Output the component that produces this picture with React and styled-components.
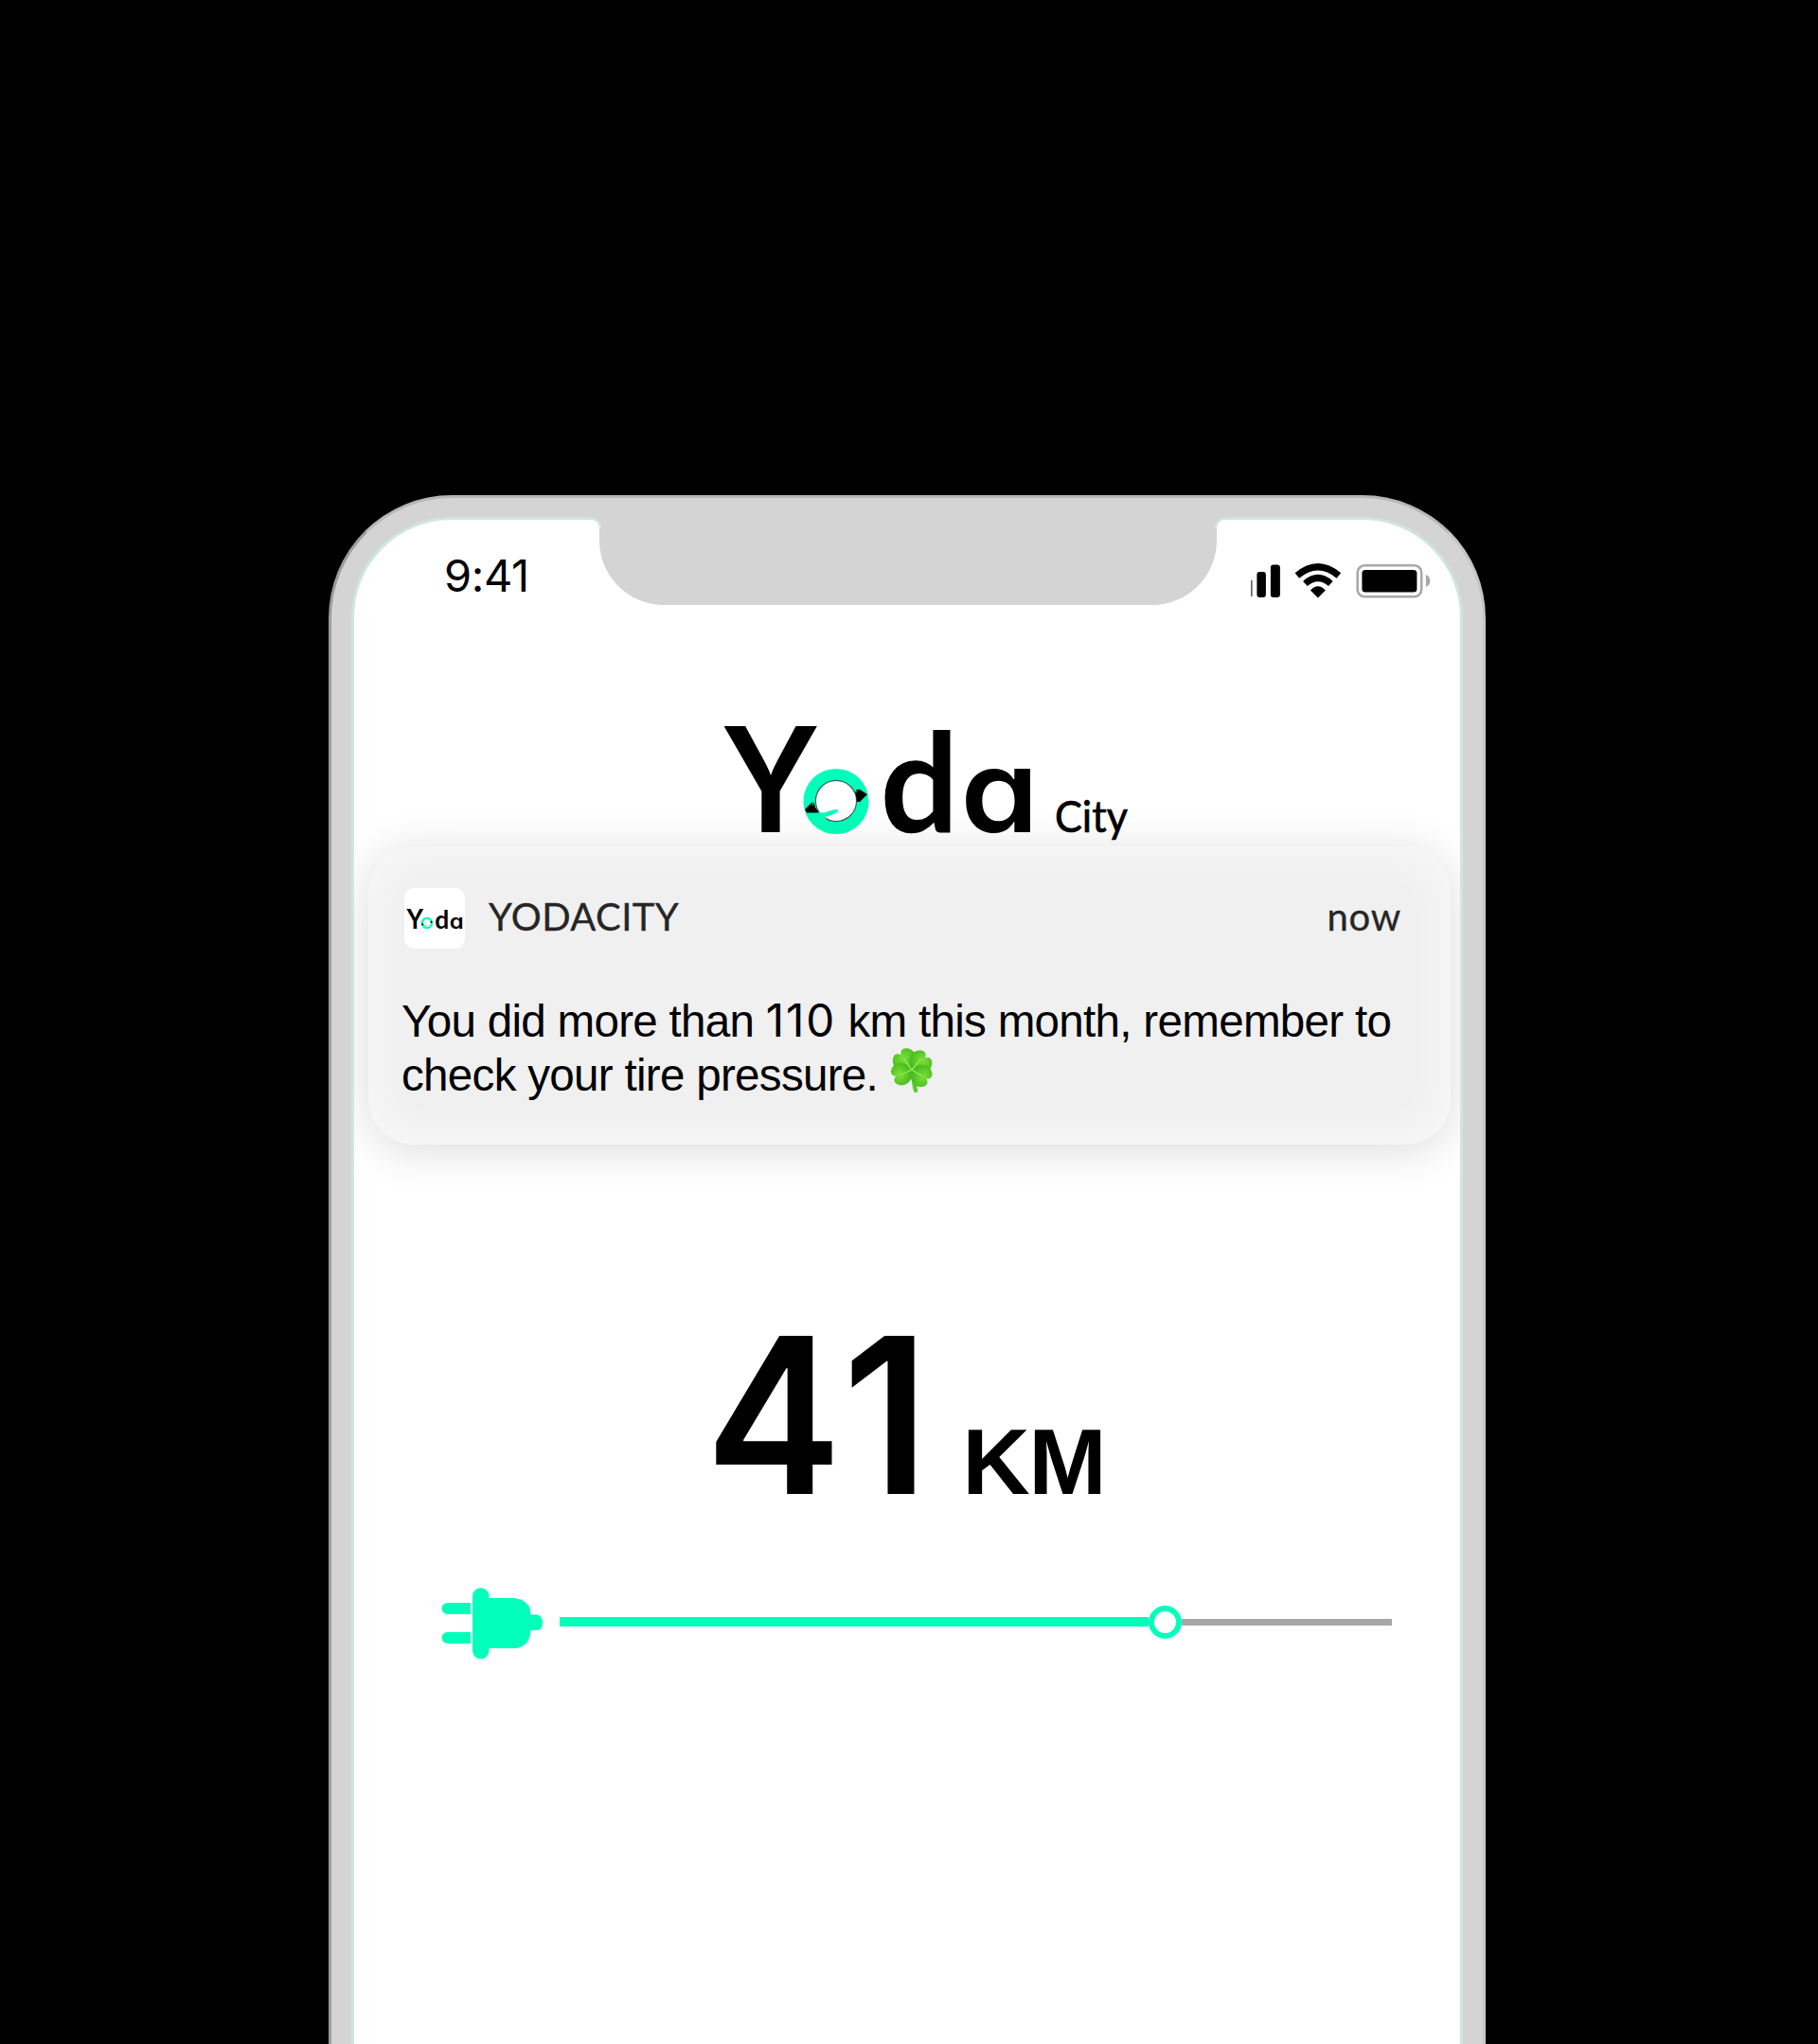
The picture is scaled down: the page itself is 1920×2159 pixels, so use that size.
import React from "react";
import styled, { createGlobalStyle } from "styled-components";

const mint = "#00ffba";
const sans = `"Liberation Sans", Arial, sans-serif`;

const GlobalStyle = createGlobalStyle`
  * { box-sizing: border-box; }
  body { margin: 0; background: #000; }
`;

const Page = styled.main`
  height: 2159px;
  padding: 523px 351px 0 347px;
  background: #000;
  overflow: hidden;
`;

const Phone = styled.div`
  position: relative;
  height: 1800px;
  padding: 20px 21px 0;
  border: 3px solid #b7b5b5;
  border-left-color: #9d9b9b;
  border-right-color: #c5c5c5;
  border-radius: 130px 130px 0 0;
  background: #d4d4d4;
`;

const Screen = styled.div`
  height: 100%;
  border: 3px solid #cfe6de;
  border-radius: 106px 106px 0 0;
  background: #fff;
  overflow: hidden;
`;

const Notch = styled.div`
  position: absolute;
  top: 18px;
  left: 283px;
  width: 652px;
  height: 95px;
  border-radius: 0 0 68px 68px;
  background: #d4d4d4;

  &::before,
  &::after {
    content: "";
    position: absolute;
    top: 2px;
    width: 12px;
    height: 12px;
  }
  &::before {
    right: calc(100% - 3px);
    background: radial-gradient(circle at 0 100%, #fff 8.5px, #cfe6de 9.5px, #cfe6de 11px, #d4d4d4 12px);
  }
  &::after {
    left: calc(100% - 3px);
    background: radial-gradient(circle at 100% 100%, #fff 8.5px, #cfe6de 9.5px, #cfe6de 11px, #d4d4d4 12px);
  }
`;

const StatusBar = styled.header`
  display: flex;
  justify-content: space-between;
  height: 100px;
  padding: 31px 30px 0 95px;
`;

const Clock = styled.time`
  font: 47px/56px Inter, ${sans};
  letter-spacing: -0.4px;
  color: #000;
`;

const StatusIcons = styled.svg`
  display: block;
  width: 192px;
  height: 40px;
  margin-top: 14px;
`;

const Brand = styled.div`
  height: 162px;
  padding: 106px 0 0 386px;
`;

const LogoSvg = styled.svg`
  display: block;
  overflow: visible;
  font-family: Inter, sans-serif;
  font-feature-settings: "cv11" 1;
`;

const Suffix = styled.text`
  font-family: Lato, sans-serif;
  font-size: 47px;
  stroke: #000;
  stroke-width: 0.7px;
`;

const StemLetter = styled.text`
  font-family: Lato, sans-serif;
  font-size: 146px;
  font-weight: 700;
`;

const Banner = styled.section`
  position: relative;
  width: 1143px;
  height: 315px;
  margin: 83px 0 0 15px;
  padding: 44px 52px 0 38px;
  border-radius: 48px;
  background: #f0f0f0;
  box-shadow: 0 6px 48px rgba(0, 0, 0, 0.14), inset 0 0 50px rgba(255, 255, 255, 0.75);
`;

const BannerHead = styled.div`
  display: flex;
  height: 64px;
  color: #262626;
  font: 40px/60px Lato, sans-serif;
`;

const AppIcon = styled.div`
  width: 64px;
  height: 64px;
  padding: 20px 2px 0;
  border-radius: 11px;
  background: #fff;
`;

const AppName = styled.span`
  margin-left: 25px;
  letter-spacing: 0.4px;
  -webkit-text-stroke: 0.3px #262626;
`;

const When = styled.span`
  margin-left: auto;
  letter-spacing: 0.8px;
  -webkit-text-stroke: 0.3px #262626;
`;

const Message = styled.p`
  margin: 47px 0 0 -3px;
  font: 47.6px/57px ${sans};
  letter-spacing: -0.72px;
  color: #000;
  white-space: nowrap;
`;

const Digits = styled.span`
  font-family: Inter, sans-serif;
  letter-spacing: 1.8px;
`;

const Clover = styled.svg`
  width: 48px;
  height: 52px;
  margin: -4px 0 0 -1px;
  vertical-align: -4px;
`;

const Range = styled.div`
  display: flex;
  align-items: baseline;
  height: 280px;
  margin-top: 145px;
  padding-left: 371px;
  font-family: Inter, ${sans};
  color: #000;
`;

const Distance = styled.span`
  font-size: 230px;
  font-weight: 600;
  line-height: 280px;
  letter-spacing: 8px;
  transform: scaleX(0.94);
  transform-origin: left;
`;

const Unit = styled.span`
  margin-left: 12px;
  font: 700 99px/100px ${sans};
  letter-spacing: -1.5px;
`;

const Charge = styled.div`
  display: flex;
  align-items: center;
  height: 80px;
  margin-top: 39px;
  padding-left: 92px;
`;

const Plug = styled.svg`
  width: 108px;
  height: 76px;
  margin-top: 3px;
  flex: none;
`;

const Track = styled.div`
  display: flex;
  align-items: center;
  width: 879px;
  margin-left: 17px;
`;

const Filled = styled.i`
  width: 622px;
  height: 9.5px;
  background: ${mint};
`;

const Knob = styled.i`
  width: 35px;
  height: 35px;
  border: 6px solid ${mint};
  border-radius: 50%;
  background: #fff;
`;

const Rest = styled.i`
  flex: 1;
  height: 7px;
  background: #a7a7a7;
`;

function Logo({ width, height, box, city }) {
  return (
    <LogoSvg width={width} height={height} viewBox={box}>
      <text transform="translate(21 138.5) scale(.96 1)" fontSize="154" fontWeight="600">Y</text>
      <circle cx="143" cy="106.5" r="28" fill="none" stroke={mint} strokeWidth="13" />
      <circle cx="143" cy="106" r="21.6" fill="#fff" stroke="#3b655b" strokeWidth="1.2" />
      <path d="M110 115l8-8 .5 5 1-5 1.5 6 4 5.500-13 0z" fill="#000" />
      <path d="M176 99l-8-5-4 0 1 3-2-1 1 4 1 7 3 0z" fill="#000" />
      <path d="M124 118c9 2 12-3 20-3 4 1-3 6-13 8l3 5c-6-1-10-5-10-10z" fill={mint} />
      <StemLetter transform="translate(189.500 138.500)">d</StemLetter>
      <text transform="translate(274.500 138.500) scale(1.080 1)" fontSize="122" fontWeight="600">a</text>
      {city && (
        <Suffix x="374" y="138.5" textLength="77" lengthAdjust="spacingAndGlyphs">City</Suffix>
      )}
    </LogoSvg>
  );
}

function CloverIcon() {
  const leaf = "M0 0C-12-3-13-13-8-18-5-21-1-20 0-16 1-20 5-21 8-18 13-13 12-3 0 0z";
  return (
    <Clover viewBox="0 0 46 50">
      <defs>
        <radialGradient id="leaf" cx=".5" cy=".35" r=".65">
          <stop offset="0" stopColor="#7ce03a" />
          <stop offset="1" stopColor="#3fb51a" />
        </radialGradient>
      </defs>
      <path d="M23 25c3 8 1 14 4 21" fill="none" stroke="#5cc52b" strokeWidth="4" strokeLinecap="round" />
      <g transform="translate(23 25)" fill="url(#leaf)">
        <path d={leaf} transform="rotate(-36) scale(1.130)" />
        <path d={leaf} transform="rotate(48) scale(1.100)" />
        <path d={leaf} transform="rotate(122) scale(1.050)" />
        <path d={leaf} transform="rotate(-112) scale(1.050)" />
      </g>
      <path d="M23 25L15 14M23 25l9-11M23 25l10 6M23 25l-11 5" stroke="#9aec62" strokeWidth="1.200" fill="none" />
    </Clover>
  );
}

export default function App() {
  return (
    <Page>
      <GlobalStyle />
      <Phone>
        <Screen>
          <StatusBar>
            <Clock>9:41</Clock>
            <StatusIcons viewBox="0.6 0 192 40">
              <path d="M2.500 19v17" stroke="#000" strokeWidth="1" />
              <rect x="8" y="10" width="9.500" height="27" rx="3" />
              <rect x="22.500" y="2.500" width="10" height="34.500" rx="3" />
              <g fill="none" stroke="#000" strokeWidth="7">
                <path d="M50.500 14Q72.500-4.500 94.500 14" />
                <path d="M59 22.500Q72.500 10.500 86 22.500" />
              </g>
              <path d="M64.500 29.500q8-8.500 16 0l-8 8z" />
              <rect x="114.300" y="3.300" width="67.500" height="33" rx="7.500" fill="none" stroke="#a8a8a8" strokeWidth="2.600" />
              <rect x="119" y="8" width="58" height="23.500" rx="3.500" />
              <path d="M186.500 13q4.500 2 4.500 6.500t-4.500 6.500z" fill="#a8a8a8" />
            </StatusIcons>
          </StatusBar>
          <Brand>
            <Logo width={440} height={150} box="20 15 440 150" city />
          </Brand>
          <Banner>
            <BannerHead>
              <AppIcon>
                <Logo width={60} height={24} box="22 14 331 130" />
              </AppIcon>
              <AppName>YODACITY</AppName>
              <When>now</When>
            </BannerHead>
            <Message>
              You did more than <Digits>110</Digits> km this month, remember to
              <br />
              check your tire pressure. <CloverIcon />
            </Message>
          </Banner>
          <Range>
            <Distance>41</Distance>
            <Unit>KM</Unit>
          </Range>
          <Charge>
            <Plug viewBox="26 17 108 76" fill={mint}>
              <path d="M57 33v12H32.500a6 6 0 0 1 0-12zM57 64v12H32.500a6 6 0 0 1 0-12z" />
              <rect x="59" y="17.300" width="17.500" height="75" rx="8.700" />
              <path d="M75 28h28q17.500 2 17.500 17.500h7q5.500 1.500 5.500 8.500t-5.500 8h-7q-1 17-15.500 19H75z" />
            </Plug>
            <Track>
              <Filled />
              <Knob />
              <Rest />
            </Track>
          </Charge>
        </Screen>
        <Notch />
      </Phone>
    </Page>
  );
}
